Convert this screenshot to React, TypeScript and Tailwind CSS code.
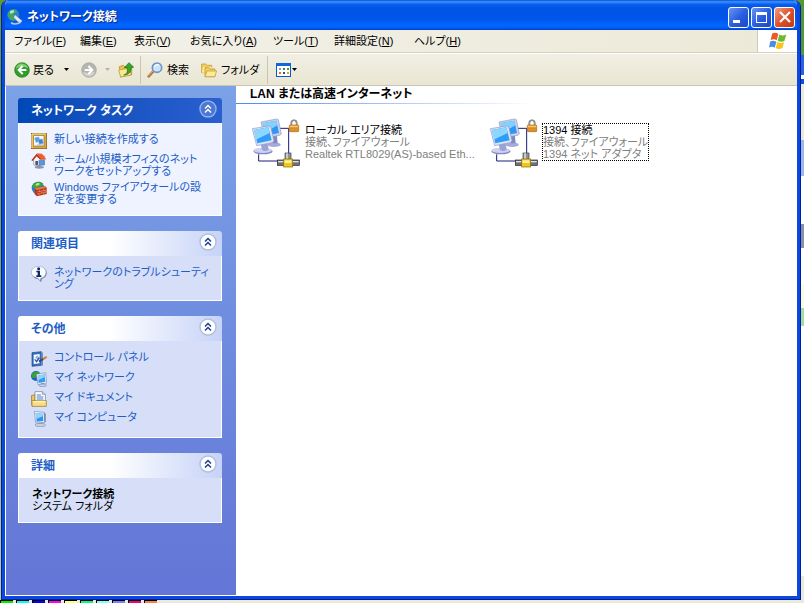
import { ReactNode } from "react";

const NewConnectionIcon = () => (
  <svg viewBox="0 0 48 48" className="size-4 shrink-0" aria-hidden="true">
    <rect x="1" y="1" width="46" height="46" fill="#d6a838" stroke="#7c5510" strokeWidth="2" />
    <path d="M3 45V3h42" fill="none" stroke="#f6e09a" strokeWidth="3" />
    <rect x="8" y="8" width="31" height="31" fill="#f6f8fc" stroke="#a87a1c" strokeWidth="2" />
    <path d="M11 15l12-3 4 13-12 3z" fill="#4f9cec" stroke="#8fa8d0" strokeWidth="2" />
    <path d="M22 20l12-2 3 13-12 3z" fill="#3584e2" stroke="#8fa8d0" strokeWidth="2" />
    <path d="M18 36h18" stroke="#a9b8d4" strokeWidth="3" />
  </svg>
);

const HomeNetworkIcon = () => (
  <svg viewBox="0 0 48 48" className="size-4 shrink-0" aria-hidden="true">
    <path d="M8 17L20 5l20 4v27l-26 3-6-4z" fill="#f4f6fa" stroke="#7f8da8" strokeWidth="2" />
    <path d="M1 22L17 2l16 17-5 1-11-10L5 24z" fill="#b8300e" />
    <path d="M17 1l16 1 13 17-14 2z" fill="#ee6030" />
    <path d="M24 22h16v13H24z" fill="#4f98ea" stroke="#5a78a8" strokeWidth="2" />
    <path d="M13 24h8v13h-8z" fill="#42587e" />
    <path d="M25 37v6" stroke="#6a7c9c" strokeWidth="7" />
    <ellipse cx="25" cy="43" rx="14" ry="4" fill="#8795b2" />
  </svg>
);

const FirewallIcon = () => (
  <svg viewBox="0 0 48 48" className="size-4 shrink-0" aria-hidden="true">
    <circle cx="21" cy="21" r="19" fill="#2e7cd8" />
    <path d="M4 14C10 1 28-1 36 7c2 8-10 6-14 12-4 6-15 4-18-5z" fill="#3fa830" />
    <path d="M14 9c6-4 12-3 12 0s-8 6-12 5z" fill="#b4e69a" />
    <path d="M11 22l32-6 4 4v19L18 46l-7-6z" fill="#bc3612" />
    <path d="M11 22l32-6 4 4-30 7z" fill="#ea7a4c" />
    <path d="M18 33l29-6M18 39l29-6M26 26v6M38 24v6M32 31v6M42 29v5M24 38v6M38 35v6" stroke="#f4b090" strokeWidth="1.5" />
  </svg>
);

const InfoIcon = () => (
  <svg viewBox="0 0 48 48" className="size-4 shrink-0" aria-hidden="true">
    <path d="M25 3c13 0 22 8 22 18 0 9-6 15-14 17l-3 10-9-9C10 38 3 31 3 21 3 11 12 3 25 3z" fill="#5f7194" />
    <path d="M23 1c13 0 22 8 22 18S37 36 29 37l-2 7-7-8C10 35 1 29 1 19S10 1 23 1z" fill="#fbfdff" stroke="#93a5c4" strokeWidth="2" />
    <circle cx="23" cy="8" r="4.5" fill="#10286e" />
    <path d="M16 14h11v14h4v5H16v-5h4v-9h-4z" fill="#10286e" />
  </svg>
);

const ControlPanelIcon = () => (
  <svg viewBox="0 0 48 48" className="size-4 shrink-0" aria-hidden="true">
    <path d="M3 5l28-3v41L3 46z" fill="#2f6fc4" stroke="#1f4278" strokeWidth="2" />
    <path d="M8 11l18-2v28L8 39z" fill="#fff" />
    <path d="M31 2l5 3v39l-5-1z" fill="#6f90c0" />
    <path d="M12 19l7-6 6 8-6 7z" fill="#8cb8ec" />
    <path d="M11 25l6 7 8-12" fill="none" stroke="#2b56a8" strokeWidth="4" />
    <path d="M24 32l14-9" stroke="#2c4c80" strokeWidth="6" />
    <path d="M36 24l11-6" stroke="#d88038" strokeWidth="6" />
  </svg>
);

const MyNetworkIcon = () => (
  <svg viewBox="0 0 48 48" className="size-4 shrink-0" aria-hidden="true">
    <circle cx="15" cy="15" r="15" fill="#2460c4" />
    <path d="M2 10C8 1 18 0 24 3c2 6-7 7-8 13-2 6-12 7-14 1z" fill="#35a430" />
    <path d="M16 10l28-5 3 31-26 5z" fill="#eef3fc" stroke="#7c8eb2" strokeWidth="2" />
    <path d="M20 14l21-4 2 22-20 4z" fill="#339af2" />
    <path d="M20 14l21-4 1 8-21 10z" fill="#90d0fc" />
    <path d="M30 37l9-1 1 6h-9z" fill="#8c98c0" />
    <ellipse cx="35" cy="43" rx="12" ry="4" fill="#c8d0e8" stroke="#6a779e" strokeWidth="1.5" />
  </svg>
);

const MyDocumentsIcon = () => (
  <svg viewBox="0 0 48 48" className="size-4 shrink-0" aria-hidden="true">
    <path d="M1 14l11-3v31l-9 3z" fill="#f0c64c" stroke="#94700f" strokeWidth="2" />
    <path d="M12 2h22l9 8v29H12z" fill="#fff" stroke="#66789c" strokeWidth="2" />
    <path d="M34 2v8h9" fill="#d5deee" stroke="#66789c" strokeWidth="2" />
    <path d="M17 12h13M17 18h20M17 24h20" stroke="#4c7ac2" strokeWidth="3" />
    <path d="M3 29h43v17H3z" fill="#f7dd84" stroke="#94700f" strokeWidth="2" />
    <path d="M5 32h39" stroke="#fff6cc" strokeWidth="3" />
  </svg>
);

const MyComputerIcon = () => (
  <svg viewBox="0 0 48 48" className="size-4 shrink-0" aria-hidden="true">
    <path d="M10 1l29 3 2 30-27 2z" fill="#eef3fc" stroke="#7c8cb0" strokeWidth="2" />
    <path d="M14 6l21 2 2 22-20 2z" fill="#2f94f0" />
    <path d="M14 6l21 2v8L16 24z" fill="#96d2fd" />
    <path d="M39 4l5 5v24l-3 1z" fill="#6c7ca2" />
    <path d="M23 36h10l3 5H22z" fill="#8c98c0" />
    <ellipse cx="28" cy="42" rx="16" ry="5" fill="#c8d0e8" stroke="#6a779e" strokeWidth="1.5" />
  </svg>
);

const TitleIcon = () => (
  <svg viewBox="0 0 48 48" className="size-4 shrink-0" aria-hidden="true">
    <circle cx="19" cy="18" r="18" fill="#2f80c8" />
    <path d="M2 14C5 3 20-2 30 4c2 8-8 6-9 13-1 7 6 8 3 16-10 4-23-6-22-19z" fill="#3fa468" />
    <path d="M9 7c6-5 13-4 13 0s-8 7-13 7z" fill="#b4e4cc" />
    <path d="M24 17l14 12 8 6-5 6-9-3-12-13z" fill="#e3ebf5" stroke="#5f779a" strokeWidth="1.5" />
    <path d="M12 41c8 6 20 4 30-2" fill="none" stroke="#b9c7da" strokeWidth="5" />
  </svg>
);

const ConnectionIcon = () => (
  <svg viewBox="0 0 144 153" className="h-[51px] w-12 shrink-0" aria-hidden="true">
    <path d="M80 34h30v76M20 112v20h62" fill="none" stroke="#1b1b7c" strokeWidth="3" />
    <ellipse cx="66" cy="83" rx="20" ry="7" fill="#a4abd6" />
    <path d="M60 54l14-3 3 28H62z" fill="#8189c0" />
    <path d="M27 15l47-9 5 2 9 43-5 4-46 8z" fill="#c9d2ee" stroke="#8d98c4" strokeWidth="2" />
    <path d="M32 19l41-8 8 37-41 8z" fill="#2f96f4" />
    <path d="M32 19l41-8 3 14-38 22z" fill="#86d0ff" />
    <ellipse cx="33" cy="103" rx="29" ry="9" fill="#8188c4" />
    <ellipse cx="32" cy="100" rx="28" ry="8" fill="#ccd1ee" />
    <path d="M26 80l20-4 4 22c-6 5-15 5-20 1z" fill="#9aa2d6" />
    <path d="M1 35l49-8 6 2 10 42-6 6-46 9z" fill="#dde4f8" stroke="#8d98c4" strokeWidth="2" />
    <path d="M6 39l43-8 10 39-43 9z" fill="#2f9cf6" />
    <path d="M6 39l43-8 4 17-42 20z" fill="#8ed6ff" />
    <path d="M118 26v-8c0-11 16-11 16 0v8" fill="none" stroke="#6b6b6b" strokeWidth="5" />
    <path d="M118 24v-6c0-11 16-11 16 0v6" fill="none" stroke="#b5b5b5" strokeWidth="2" />
    <rect x="112" y="24" width="28" height="20" rx="2" fill="#e79a2e" stroke="#a8681a" strokeWidth="2" />
    <path d="M114 28h24" stroke="#ffd07c" strokeWidth="3" />
    <path d="M112 35h28M112 40h28" stroke="#c67c20" strokeWidth="1.5" />
    <rect x="99" y="108" width="18" height="22" fill="#8c9296" stroke="#3b3f42" strokeWidth="2" />
    <path d="M105 109v18" stroke="#e3e7ea" strokeWidth="4" />
    <rect x="76" y="129" width="66" height="16" fill="#6c7276" stroke="#202224" strokeWidth="2" />
    <path d="M78 134h62" stroke="#dfe3e6" strokeWidth="4" />
    <rect x="95" y="126" width="27" height="24" fill="#f2c51d" stroke="#8a6a06" strokeWidth="2" />
    <path d="M98 130h20v8H98z" fill="#fff2a2" />
  </svg>
);

const RoundArrow = ({ back = false }: { back?: boolean }) => (
  <svg viewBox="0 0 48 48" className={back ? "size-4" : "size-4 rotate-180"} aria-hidden="true">
    <circle cx="24" cy="24" r="22" fill={back ? "#2f9e2b" : "#b4b4b0"} stroke={back ? "#1c7a1c" : "#a2a29e"} strokeWidth="2" />
    <path d="M6 20C8 8 18 4 26 5s16 6 16 14c-12-6-24-6-36 1z" fill={back ? "#7fd06e" : "#d2d2cf"} />
    <path d="M26 12L14 24l12 12M15 24h22" fill="none" stroke="#fff" strokeWidth="6" />
  </svg>
);

const UpFolderIcon = () => (
  <svg viewBox="0 0 48 48" className="size-4" aria-hidden="true">
    <path d="M4 14l12-4 5 5 20-3v26L8 45z" fill="#e9c250" stroke="#a98221" strokeWidth="2" />
    <path d="M2 24l30-5 8 20-32 6z" fill="#fbe892" stroke="#b8922d" strokeWidth="2" />
    <path d="M17 39c10-3 12-9 11-22h-9L33 2l14 14h-8c1 14-7 23-22 23z" fill="#38a82c" stroke="#176a16" strokeWidth="2" />
  </svg>
);

const SearchIcon = () => (
  <svg viewBox="0 0 48 48" className="size-4" aria-hidden="true">
    <path d="M18 29L5 43" stroke="#b4713c" strokeWidth="8" strokeLinecap="round" />
    <path d="M17 28L5 41" stroke="#e5a86c" strokeWidth="3" strokeLinecap="round" />
    <circle cx="30" cy="17" r="14" fill="#c9e5fb" stroke="#6f93c8" strokeWidth="5" />
    <path d="M22 15c2-6 8-8 13-6" fill="none" stroke="#fff" strokeWidth="4" />
  </svg>
);

const FoldersIcon = () => (
  <svg viewBox="0 0 48 48" className="size-4" aria-hidden="true">
    <path d="M2 6h12l4 4h14v22H2z" fill="#f3cf62" stroke="#b98b22" strokeWidth="2" />
    <path d="M6 16h28l-4 16H3z" fill="#fdeb9c" />
    <path d="M12 17h11l4 4h15v23H12z" fill="#f3cf62" stroke="#b98b22" strokeWidth="2" />
    <path d="M18 27h29l-6 17H12z" fill="#fdeb9c" stroke="#c39529" strokeWidth="2" />
  </svg>
);

const ViewsIcon = () => (
  <svg viewBox="0 0 15 14" className="h-3.5 w-[15px]" aria-hidden="true">
    <rect x="0.5" y="0.5" width="14" height="13" fill="#fff" stroke="#0a5bc8" />
    <path d="M0 0h15v3H0z" fill="#1167d8" />
    <path d="M3 5h2v2H3z" fill="#9a8bc0" />
    <path d="M7 5h2v2H7z" fill="#4a7d50" />
    <path d="M11 5h2v2h-2z" fill="#35a035" />
    <path d="M3 9h2v2H3z" fill="#d8703a" />
    <path d="M7 9h2v2H7z" fill="#2a4aa0" />
    <path d="M11 9h2v2h-2z" fill="#d8a820" />
  </svg>
);

const DropArrow = ({ muted = false }: { muted?: boolean }) => (
  <svg viewBox="0 0 5 3" className="h-[3px] w-[5px]" aria-hidden="true">
    <path d="M0 0h5L2.5 3z" fill={muted ? "#b5b3a5" : "#000"} />
  </svg>
);

const WindowsFlag = () => (
  <svg viewBox="0 0 60 56" className="h-[18px] w-5" aria-hidden="true">
    <path d="M12 5c7-4 13-3 19 1l-5 20c-6-4-12-4-19-1z" fill="#ee5a24" />
    <path d="M34 8c7 4 13 4 22 0l-6 20c-7 4-14 3-21-1z" fill="#6cbb2c" />
    <path d="M6 29c7-3 13-3 19 1l-5 19c-6-4-12-4-18-1z" fill="#4a8fe2" />
    <path d="M28 31c7 4 13 4 21 1l-5 18c-8 4-15 4-21 0z" fill="#f8c31c" />
  </svg>
);

const Chevrons = ({ primary = false }: { primary?: boolean }) => (
  <svg viewBox="0 0 18 18" className="size-[18px]" aria-hidden="true">
    <circle cx="9" cy="9" r="8" fill={primary ? "#4a78d2" : "#fff"} stroke={primary ? "#8fb0ea" : "#b4bedd"} strokeWidth="1.5" />
    <path d="M6 8.5l3-3 3 3M6 12.5l3-3 3 3" fill="none" stroke={primary ? "#fff" : "#1c3f94"} strokeWidth="1.5" />
  </svg>
);

const menus = [
  { label: "ファイル", hotkey: "F", width: "w-[66px]" },
  { label: "編集", hotkey: "E", width: "w-[54px]" },
  { label: "表示", hotkey: "V", width: "w-14" },
  { label: "お気に入り", hotkey: "A", width: "w-[83px]" },
  { label: "ツール", hotkey: "T", width: "w-[61px]" },
  { label: "詳細設定", hotkey: "N", width: "w-20" },
  { label: "ヘルプ", hotkey: "H", width: "w-[60px]" },
];

const tasks = [
  { icon: <NewConnectionIcon />, lines: ["新しい接続を作成する"] },
  { icon: <HomeNetworkIcon />, lines: ["ホーム/小規模オフィスのネット", "ワークをセットアップする"] },
  { icon: <FirewallIcon />, lines: ["Windows ファイアウォールの設", "定を変更する"] },
];

const related = [
  { icon: <InfoIcon />, lines: ["ネットワークのトラブルシューティ", "ング"] },
];

const places = [
  { icon: <ControlPanelIcon />, lines: ["コントロール パネル"] },
  { icon: <MyNetworkIcon />, lines: ["マイ ネットワーク"] },
  { icon: <MyDocumentsIcon />, lines: ["マイ ドキュメント"] },
  { icon: <MyComputerIcon />, lines: ["マイ コンピュータ"] },
];

const connections = [
  { name: "ローカル エリア接続", status: "接続、ファイアウォール", device: "Realtek RTL8029(AS)-based Eth...", selected: false },
  { name: "1394 接続", status: "接続、ファイアウォール", device: "1394 ネット アダプタ", selected: true },
];

const swatches = [
  "bg-[#00f000]", "bg-[#00ffff]", "bg-[#0000ff]", "bg-[#ff00ff]", "bg-[#ffff80]",
  "bg-[#00ff80]", "bg-[#80ffff]", "bg-[#8080ff]", "bg-[#f0007c]", "bg-[#ff8040]",
];

const Panel = ({ title, primary = false, children }: { title: string; primary?: boolean; children: ReactNode }) => (
  <section>
    <div
      className={
        primary
          ? "flex h-[25px] items-center justify-between rounded-t-[3px] bg-linear-to-r from-[#0049b5] to-[#2a5fd0] pr-[5px] pl-[13px] text-white"
          : "flex h-[25px] items-center justify-between rounded-t-[3px] bg-linear-to-r from-white from-45% to-[#c6d3f7] pr-[5px] pl-[13px] text-[#215dc6]"
      }
    >
      <h2 className="text-[12px] leading-3 font-bold">{title}</h2>
      <button type="button" aria-label={title} className="self-start pt-0.5">
        <Chevrons primary={primary} />
      </button>
    </div>
    <div
      className={
        primary
          ? "border border-t-0 border-white bg-[#eff3ff] px-3 py-2.5"
          : "border border-t-0 border-white bg-[#d6dff7] px-3 py-2.5"
      }
    >
      {children}
    </div>
  </section>
);

const TaskList = ({ items }: { items: { icon: ReactNode; lines: string[] }[] }) => (
  <ul className="flex flex-col gap-1">
    {items.map((item) => (
      <li key={item.lines[0]}>
        <a href="#" className="flex min-h-4 gap-[7px] text-[11px] leading-3 whitespace-nowrap text-[#215dc6]">
          {item.icon}
          <span>
            {item.lines.map((line) => (
              <span key={line} className="block">{line}</span>
            ))}
          </span>
        </a>
      </li>
    ))}
  </ul>
);

const TitleBar = () => (
  <header className="flex h-[30px] items-center gap-1 bg-[linear-gradient(180deg,#0a4fd0_0%,#3b93ff_6%,#0a5ef0_14%,#0054e3_30%,#0055ea_60%,#0066ff_85%,#0060fa_92%,#0040c8_100%)] pt-1 pr-0.5 pl-0.5">
    <TitleIcon />
    <h1 className="flex-1 text-[12px] leading-4 font-bold text-white [text-shadow:1px_1px_1px_#0a2a80]">ネットワーク接続</h1>
    <div className="flex gap-0.5">
      <button type="button" aria-label="最小化" className="flex size-[21px] items-end rounded-[3px] border border-white bg-linear-to-br from-[#6a94f4] via-[#2a5fe0] to-[#1c48c8] pb-1 pl-1">
        <span className="block h-[3px] w-[7px] bg-white" />
      </button>
      <button type="button" aria-label="最大化" className="flex size-[21px] items-center justify-center rounded-[3px] border border-white bg-linear-to-br from-[#6a94f4] via-[#2a5fe0] to-[#1c48c8]">
        <span className="block size-[11px] border border-t-[3px] border-white" />
      </button>
      <button type="button" aria-label="閉じる" className="flex size-[21px] items-center justify-center rounded-[3px] border border-white bg-linear-to-br from-[#f09a80] via-[#e0502c] to-[#c03a14]">
        <svg viewBox="0 0 12 12" className="size-3" aria-hidden="true">
          <path d="M1 1l10 10M11 1L1 11" stroke="#fff" strokeWidth="2.2" />
        </svg>
      </button>
    </div>
  </header>
);

const MenuBar = () => (
  <div className="flex h-[23px] border-b border-[#d8d2bd] bg-linear-to-r from-[#f3f2ea] to-[#ece9d8]">
    <nav className="flex flex-1 pl-[9px]">
      {menus.map((menu) => (
        <button key={menu.hotkey} type="button" className={`text-left text-[11px] leading-[22px] whitespace-nowrap ${menu.width}`}>
          {menu.label}(<u>{menu.hotkey}</u>)
        </button>
      ))}
    </nav>
    <div className="flex w-10 items-center justify-center border-l border-[#cfcab5] bg-white">
      <WindowsFlag />
    </div>
  </div>
);

const ToolBar = () => (
  <div className="flex h-[33px] items-center border-t border-b border-t-white border-b-[#c9c5b2] bg-linear-to-b from-[#f1efe4] to-[#e9e6d3] pl-[9px] text-[11px] leading-4">
    <button type="button" className="flex w-[49px] items-center gap-[3px]">
      <RoundArrow back />
      戻る
    </button>
    <button type="button" aria-label="戻る履歴" className="flex h-4 w-[18px] items-center pl-[1px]">
      <DropArrow />
    </button>
    <button type="button" aria-label="進む" className="w-6">
      <RoundArrow />
    </button>
    <button type="button" aria-label="進む履歴" className="flex h-4 w-[13px] items-center">
      <DropArrow muted />
    </button>
    <button type="button" aria-label="上へ" className="w-[22px]">
      <UpFolderIcon />
    </button>
    <div className="h-7 w-px bg-[#c9c5b2]" />
    <button type="button" className="ml-1.5 flex w-[54px] items-center gap-1">
      <SearchIcon />
      検索
    </button>
    <button type="button" className="flex w-[66px] items-center gap-1 whitespace-nowrap">
      <FoldersIcon />
      フォルダ
    </button>
    <div className="h-7 w-px bg-[#c9c5b2]" />
    <button type="button" aria-label="表示" className="ml-2 flex items-center gap-px">
      <ViewsIcon />
      <DropArrow />
    </button>
  </div>
);

const App = () => {
  return (
    <div className="flex min-h-screen flex-col bg-[#ece9d8] font-['Liberation_Sans','Noto_Sans_CJK_JP',sans-serif] text-black [font-feature-settings:'palt']">
      <div className="flex flex-1">
        <div className="w-px bg-linear-to-b from-[#5c9e2e] via-[#7cb35a] to-[#b9cfa0]" />
        <div className="flex flex-1 flex-col bg-[#5c9e2e]">
          <div className="flex flex-1 flex-col rounded-t-[7px] border-x border-b border-[#001ea0]">
            <div className="flex flex-1 flex-col overflow-hidden rounded-t-[6px] border-x-3 border-b-3 border-[#0a48e0] bg-white">
              <TitleBar />
              <MenuBar />
              <ToolBar />
              <div className="flex flex-1">
                <aside className="flex w-[231px] shrink-0 flex-col gap-[15px] border-b border-l border-white bg-linear-to-b from-[#7ba2e7] to-[#6375d6] py-3 pr-3.5 pl-3">
                  <Panel title="ネットワーク タスク" primary>
                    <TaskList items={tasks} />
                  </Panel>
                  <Panel title="関連項目">
                    <TaskList items={related} />
                  </Panel>
                  <Panel title="その他">
                    <TaskList items={places} />
                  </Panel>
                  <Panel title="詳細">
                    <div className="pl-px text-[11px] leading-3">
                      <p className="font-bold">ネットワーク接続</p>
                      <p>システム フォルダ</p>
                    </div>
                  </Panel>
                </aside>
                <main className="flex-1">
                  <h2 className="pl-3.5 text-[12px] leading-[17px] font-bold">LAN または高速インターネット</h2>
                  <div className="h-px w-[300px] bg-linear-to-r from-[#4a8ae8] to-white" />
                  <ul className="flex pt-[13px] pl-4">
                    {connections.map((item) => (
                      <li key={item.name} className="flex w-[238px] gap-1">
                        <ConnectionIcon />
                        <div className={`mt-1.5 self-start border border-dotted text-[11px] leading-3 whitespace-nowrap ${item.selected ? "border-black" : "border-transparent"}`}>
                          <p>{item.name}</p>
                          <p className="text-[#808080]">{item.status}</p>
                          <p className="text-[#808080]">{item.device}</p>
                        </div>
                      </li>
                    ))}
                  </ul>
                </main>
              </div>
            </div>
          </div>
        </div>
        {/* sliver of the windows behind */}
        <div className="flex w-[3px] flex-col bg-white">
          <div className="h-[55px] bg-[#4f9a34]" />
          <div className="h-5 bg-[#2a62e4]" />
          <div className="h-1 bg-white" />
          <div className="h-[5px] bg-[#0a50e0]" />
          <div className="h-14 bg-[#ece9d8]" />
          <div className="h-9 bg-[#9cb8e8]" />
          <div className="h-12 bg-white" />
          <div className="h-6 bg-[#8a90a8]" />
          <div className="h-9 bg-white" />
          <div className="h-6 bg-[#fbfbe0]" />
          <div className="h-[18px] bg-[#a8dc9c]" />
          <div className="flex-1 bg-white" />
          <div className="h-6 bg-[#ece9d8]" />
        </div>
      </div>
      <div className="flex h-[3px] gap-[3px]">
        {swatches.map((color) => (
          <div key={color} className={`w-[13px] border-t border-l border-black ${color}`} />
        ))}
      </div>
    </div>
  );
};

export default App;
